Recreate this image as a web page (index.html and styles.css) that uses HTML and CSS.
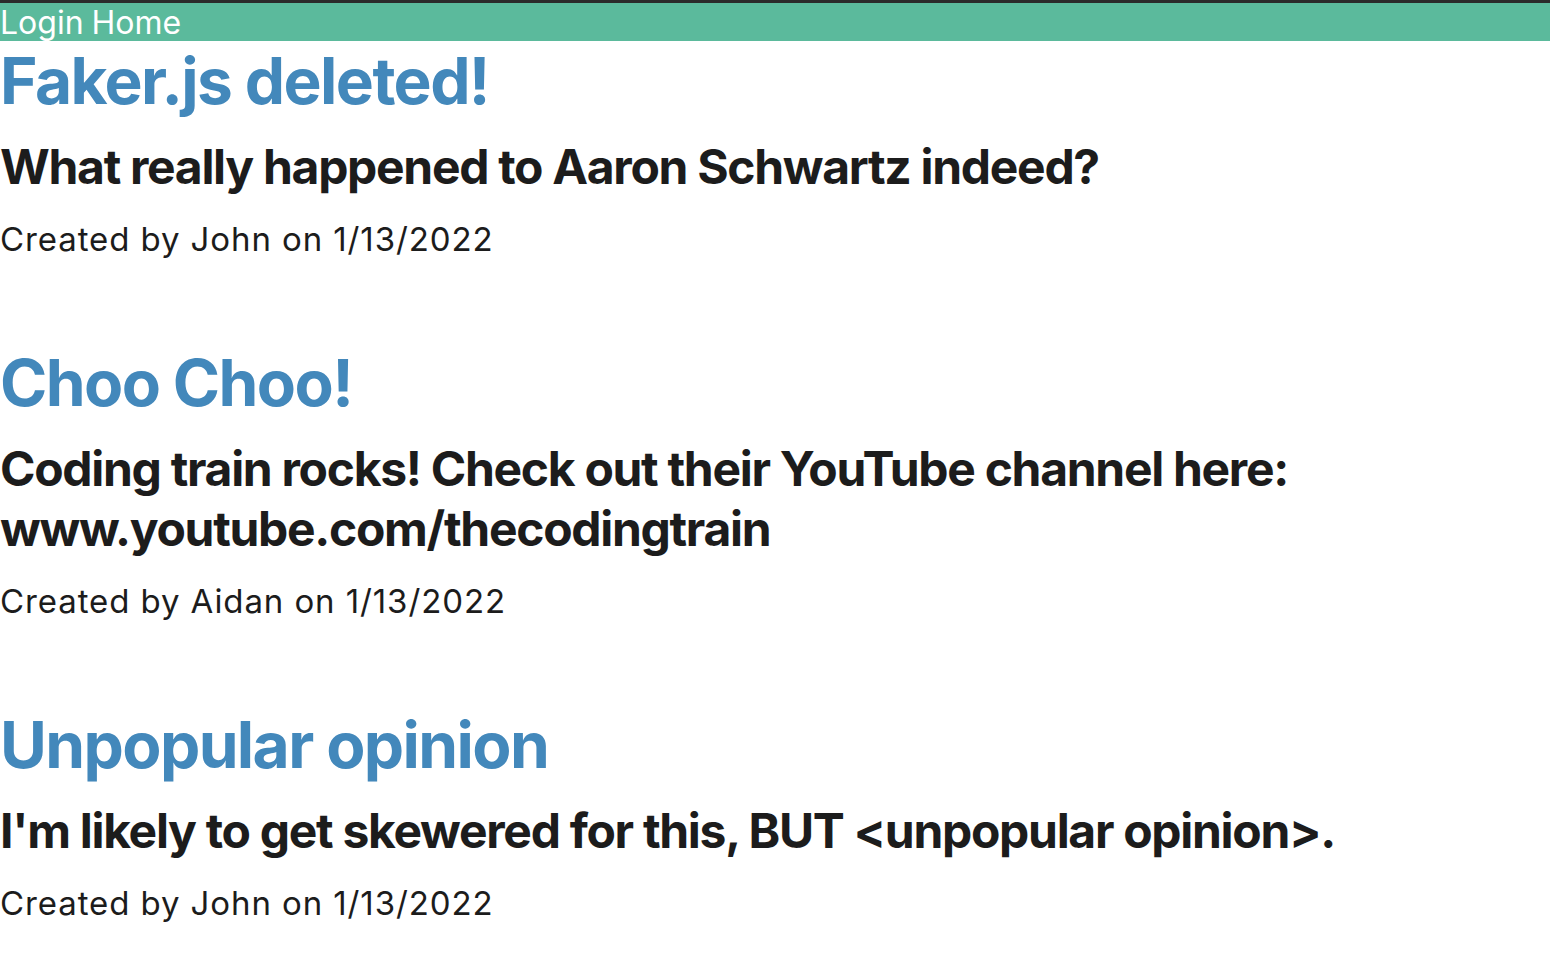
FILE: index.html
```html
<!DOCTYPE html>
<html lang="en">
<head>
<meta charset="utf-8">
<title>Posts</title>
<link rel="stylesheet" href="styles.css">
</head>
<body>
<nav class="nav">
  <a class="nav-link" href="#">Login</a>
  <a class="nav-link" href="#">Home</a>
</nav>
<main class="posts">
  <article class="post">
    <h1 class="post-title">Faker.js deleted!</h1>
    <h2 class="post-body">What really happened to Aaron Schwartz indeed?</h2>
    <p class="post-meta">Created by John on 1/13/2022</p>
  </article>
  <article class="post">
    <h1 class="post-title">Choo Choo!</h1>
    <h2 class="post-body">Coding train rocks! Check out their YouTube channel here: www.youtube.com/thecodingtrain</h2>
    <p class="post-meta">Created by Aidan on 1/13/2022</p>
  </article>
  <article class="post">
    <h1 class="post-title">Unpopular opinion</h1>
    <h2 class="post-body">I'm likely to get skewered for this, BUT &lt;unpopular opinion&gt;.</h2>
    <p class="post-meta">Created by John on 1/13/2022</p>
  </article>
</main>
</body>
</html>
```

FILE: styles.css
```css
html, body {
  margin: 0;
  padding: 0;
  background: #ffffff;
}

body {
  font-family: Inter, "Noto Sans", "Liberation Sans", sans-serif;
  color: #1c1c1c;
  border-top: 3px solid #2b2b2b;
}

.nav {
  display: flex;
  gap: 8px;
  background: #5bba9c;
  height: 38px;
  align-items: center;
  overflow: hidden;
}

.nav-link {
  color: #ffffff;
  text-decoration: none;
  font-size: 32px;
  line-height: 38px;
  padding-top: 2px;
}

.posts {
  display: flex;
  flex-direction: column;
  gap: 85px;
  padding-top: 1px;
}

.post {
  display: flex;
  flex-direction: column;
}

.post-title {
  margin: 0;
  font-size: 64px;
  line-height: 77px;
  font-weight: 700;
  letter-spacing: -1.6px;
  color: #4388bb;
}

.post-body {
  margin: 18px 0 0;
  font-size: 48px;
  line-height: 60px;
  font-weight: 700;
  letter-spacing: -1.3px;
  color: #1c1c1c;
}

.post-meta {
  margin: 23px 0 0;
  font-size: 33px;
  line-height: 39px;
  font-weight: 400;
  letter-spacing: 0.9px;
  color: #1c1c1c;
}
```
